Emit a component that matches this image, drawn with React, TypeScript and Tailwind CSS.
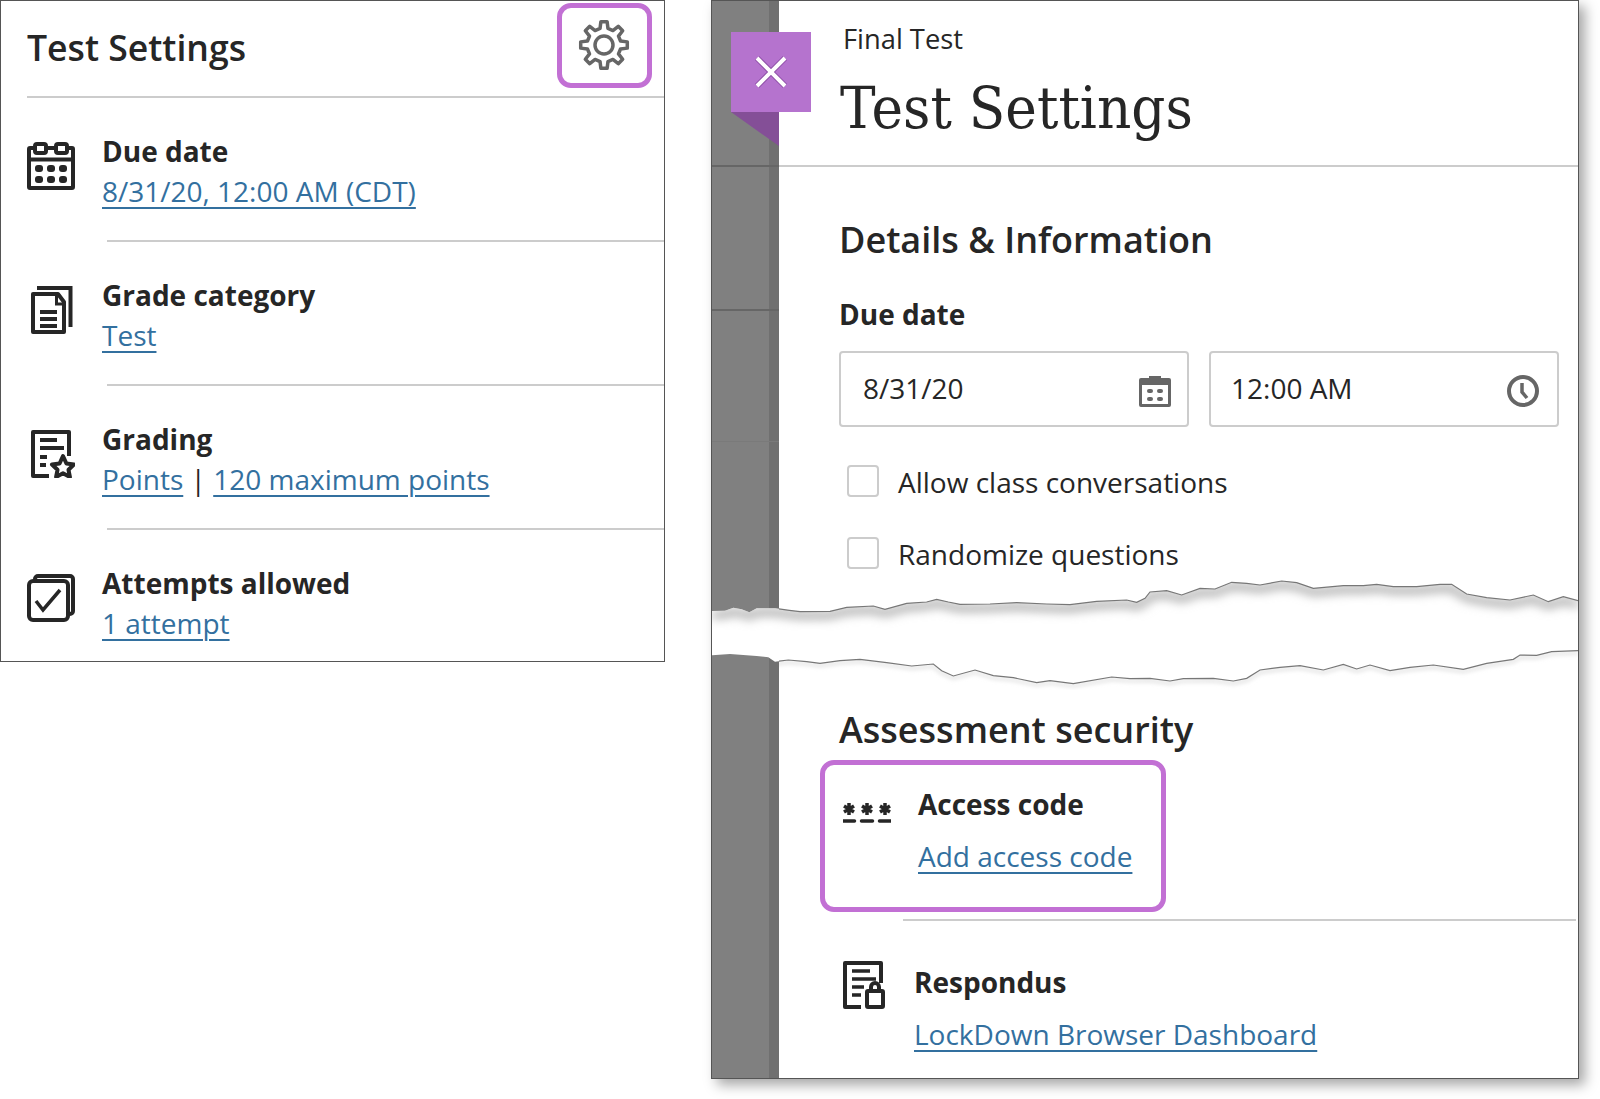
import type { ReactNode } from 'react'

const font = { fontFamily: '"Open Sans", sans-serif' }

// torn edge traced from the picture, 3 units to a pixel, starting at the panel's left side
const upperEdge = '36,123 75,122 100,113 125,118 148,127 170,115 225,115 268,121 300,125 390,124 440,112 520,108 555,118 620,100 680,96 710,88 745,96 780,103 870,102 950,98 1040,102 1110,104 1190,94 1280,90 1310,97 1335,85 1350,66 1400,62 1445,75 1500,55 1545,57 1595,37 1640,40 1680,45 1745,33 1790,38 1840,55 1930,47 1990,47 2030,43 2080,50 2150,50 2220,43 2255,43 2300,72 2360,83 2430,90 2500,75 2545,95 2590,80 2635,92'
const lowerEdge = '2635,242 2555,245 2510,256 2460,255 2440,268 2360,280 2290,298 2200,285 2130,292 2070,302 2010,285 1970,297 1930,283 1870,300 1800,287 1740,292 1680,300 1640,325 1600,333 1540,325 1450,326 1410,333 1350,325 1290,326 1235,321 1120,341 1050,332 1010,338 940,323 880,317 825,300 760,318 725,302 700,282 635,288 560,278 480,268 420,272 360,280 320,275 265,270 225,275 205,262 170,258 90,252 36,256'

const gearPath = () => {
  const cx = 26
  const cy = 26
  const teeth = 8
  const pts: string[] = []
  for (let i = 0; i < teeth; i++) {
    const a = (i * 2 * Math.PI) / teeth - Math.PI / 2
    const step = (2 * Math.PI) / teeth
    const at = (r: number, off: number) => `${(cx + r * Math.cos(a + off)).toFixed(2)},${(cy + r * Math.sin(a + off)).toFixed(2)}`
    pts.push(at(17, -step * 0.3), at(23.5, -step * 0.17), at(23.5, step * 0.17), at(17, step * 0.3))
  }
  return pts.join(' ')
}

const GearIcon = () => (
  <svg width="52" height="52" viewBox="0 0 52 52" fill="none" stroke="#666" strokeWidth="3.500" strokeLinejoin="round">
    <polygon points={gearPath()} />
    <circle cx="26" cy="26" r="9" />
  </svg>
)

const CalendarIcon = () => (
  <svg width="48" height="48" viewBox="0 0 48 48" fill="none" stroke="#262626" strokeWidth="4">
    <rect x="2" y="6" width="44" height="40" rx="1" />
    <path d="M2 17.500h44" />
    <rect x="8" y="2" width="11" height="9" rx="2" fill="#fff" />
    <rect x="29" y="2" width="11" height="9" rx="2" fill="#fff" />
    <g fill="#262626" stroke="none">
      <rect x="8" y="23" width="8" height="7" rx="3" />
      <rect x="20" y="23" width="8" height="7" rx="3" />
      <rect x="32" y="23" width="8" height="7" rx="3" />
      <rect x="8" y="34" width="8" height="7" rx="3" />
      <rect x="20" y="34" width="8" height="7" rx="3" />
      <rect x="32" y="34" width="8" height="7" rx="3" />
    </g>
  </svg>
)

const DocumentIcon = () => (
  <svg width="48" height="48" viewBox="0 0 48 48" fill="none" stroke="#262626" strokeWidth="4">
    <path d="M10 2h33.500v39" />
    <path d="M6 8h25l6 8v30H6z" strokeLinejoin="round" />
    <path d="M29.500 8v10h7" strokeWidth="3" />
    <path d="M13 26h17M13 33h17M13 40h17" />
  </svg>
)

const GradingIcon = () => (
  <svg width="48" height="48" viewBox="0 0 48 48" fill="none" stroke="#262626" strokeWidth="4">
    <path d="M22 46H6V2h36v24" strokeLinejoin="round" />
    <path d="M13 10h17M13 18h24M13 27h7M13 35h6" />
    <path d="M36 26l3.400 7.500 7.600 1-5.500 5.300 1.400 7.200-6.900-3.700-6.900 3.700 1.400-7.200-5.500-5.300 7.600-1z" strokeLinejoin="round" fill="#fff" />
  </svg>
)

const AttemptsIcon = () => (
  <svg width="48" height="48" viewBox="0 0 48 48" fill="none" stroke="#262626" strokeWidth="4">
    <path d="M8 6V5a3 3 0 0 1 3-3h32a3 3 0 0 1 3 3v32a3 3 0 0 1-3 3h-2" />
    <rect x="2" y="7" width="39" height="39" rx="4" />
    <path d="M9 27l7 9 17-20" strokeWidth="3.500" />
  </svg>
)

const AccessCodeIcon = () => (
  <svg width="48" height="20" viewBox="0 0 48 20" fill="none" stroke="#262626" strokeWidth="3.500">
    {[6, 24, 42].map((x) => (
      <g key={x}>
        <path d={`M${x} 0v12M${x - 5} 3l10 6M${x + 5} 3l-10 6`} />
        <path d={`M${x - 5.500} 18h11`} strokeWidth="3.500" strokeLinecap="round" />
      </g>
    ))}
  </svg>
)

const RespondusIcon = () => (
  <svg width="42" height="48" viewBox="0 0 42 48" fill="none" stroke="#262626" strokeWidth="4">
    <path d="M18 46H2V2h36v20" strokeLinejoin="round" />
    <path d="M9 10h18M9 18h24M9 26h12M9 34h9" strokeWidth="3.500" />
    <rect x="24" y="30" width="16" height="16" rx="1" />
    <path d="M28 30v-4a4 4 0 0 1 8 0v4" />
  </svg>
)

const SmallCalendar = () => (
  <svg width="32" height="32" viewBox="0 0 32 32">
    <path d="M2 3h8V1h12v2h8a2 2 0 0 1 2 2v25a2 2 0 0 1-2 2H2a2 2 0 0 1-2-2V5a2 2 0 0 1 2-2z" fill="#666" />
    <rect x="3" y="10" width="26" height="19" fill="#fff" />
    <g fill="#666">
      <rect x="8" y="14" width="6" height="4" rx="2" />
      <rect x="18" y="14" width="6" height="4" rx="2" />
      <rect x="8" y="22" width="6" height="4" rx="2" />
      <rect x="18" y="22" width="6" height="4" rx="2" />
    </g>
  </svg>
)

const SmallClock = () => (
  <svg width="32" height="32" viewBox="0 0 32 32" fill="none" stroke="#666">
    <circle cx="16" cy="16" r="14" strokeWidth="4" />
    <path d="M15 8v9l5 6" strokeWidth="3.500" />
  </svg>
)

const Link = ({ children }: { children: ReactNode }) => (
  <a className="text-[#33709f] underline underline-offset-[5px] decoration-2">{children}</a>
)

const SummaryRow = ({ icon, title, children, divider = true }: { icon: ReactNode; title: string; children: ReactNode; divider?: boolean }) => (
  <div>
    {divider && <div className="ml-[80px] border-t-2 border-[#ccc]" />}
    <div className="h-[142px] flex">
      <div className="w-[75px] shrink-0 pt-[44px]">{icon}</div>
      <div className="pt-[33px] text-[28px] leading-[40px] text-[#262626]">
        <div className="font-bold">{title}</div>
        <div>{children}</div>
      </div>
    </div>
  </div>
)

function TestSummary() {
  return (
    <div className="w-[665px] h-[662px] border border-[#555] bg-white shrink-0 overflow-hidden">
      <div className="ml-[26px] h-[97px] border-b-2 border-[#ccc] flex items-start justify-between">
        <div className="text-[35.600px] leading-[48px] font-semibold text-[#262626] mt-[22px]">Test Settings</div>
        <div className="w-[95px] h-[85px] mt-[2px] mr-[12px] border-[5px] border-[#c270d4] rounded-[14px] flex items-center justify-center">
          <div className="-mt-[2px] -ml-[1px]"><GearIcon /></div>
        </div>
      </div>
      <div className="ml-[26px]">
        <SummaryRow divider={false} icon={<CalendarIcon />} title="Due date">
          <Link>8/31/20, 12:00 AM (CDT)</Link>
        </SummaryRow>
        <SummaryRow icon={<DocumentIcon />} title="Grade category">
          <Link>Test</Link>
        </SummaryRow>
        <SummaryRow icon={<GradingIcon />} title="Grading">
          <Link>Points</Link> | <Link>120 maximum points</Link>
        </SummaryRow>
        <SummaryRow icon={<AttemptsIcon />} title="Attempts allowed">
          <Link>1 attempt</Link>
        </SummaryRow>
      </div>
    </div>
  )
}

function SettingsPanel() {
  return (
    <div className="relative w-[868px] h-[1079px] border border-[#555] bg-white flex shadow-[6px_6px_12px_rgba(0,0,0,0.35)]">
      {/* dimmed page behind the panel */}
      <div className="w-[67px] shrink-0 bg-[linear-gradient(90deg,#808080_57px,#707070_57px)]">
        <div className="h-[166px] border-b-2 border-[#666]" />
        <div className="h-[144px] border-b-2 border-[#666]" />
        <div className="h-[131px] border-b border-[#7a7a7a]" />
      </div>
      {/* close tab */}
      <div className="absolute left-[19px] top-[31px] w-[80px] h-[80px] bg-[#b573ce] flex items-center justify-center">
        <svg width="36" height="36" viewBox="0 0 36 36" stroke="#fff" strokeWidth="4" className="overflow-visible">
          <path d="M4 4l28 28M32 4L4 32" stroke="#8f4fa8" strokeWidth="6" />
          <path d="M4 4l28 28M32 4L4 32" />
        </svg>
      </div>
      <svg className="absolute left-[19px] top-[111px]" width="48" height="34" viewBox="0 0 48 34">
        <path d="M0 0h48v34z" fill="#844f97" />
      </svg>
      <div className="flex-1 min-w-0 text-[#262626] text-[28px] leading-[40px]">
        <div className="h-[166px] border-b-2 border-[#ccc] pl-[64px] pt-[18px]">
          <div className="text-[27.300px]">Final Test</div>
          <div className="-ml-[3px] mt-[11px] text-[58px] leading-[76px] origin-left scale-x-[0.92] whitespace-nowrap" style={{ fontFamily: '"DejaVu Serif", serif' }}>Test Settings</div>
        </div>
        <div className="pl-[60px]">
          <div className="mt-[49px] text-[36px] leading-[48px] font-semibold">Details &amp; Information</div>
          <div className="mt-[30px] font-bold">Due date</div>
          <div className="mt-[17px] flex gap-[20px]">
            <div className="w-[350px] h-[76px] border-2 border-[#ccc] rounded-[4px] pl-[22px] pr-[16px] flex items-center justify-between">
              <span className="-mt-[2px]">8/31/20</span>
              <div className="mt-[3px]"><SmallCalendar /></div>
            </div>
            <div className="w-[350px] h-[76px] border-2 border-[#ccc] rounded-[4px] pl-[20px] pr-[18px] flex items-center justify-between">
              <span className="-mt-[2px]">12:00 AM</span>
              <div className="mt-[3px]"><SmallClock /></div>
            </div>
          </div>
          <div className="mt-[38px] ml-[8px] flex items-center gap-[19px] h-[32px]">
            <div className="w-[32px] h-[32px] border-2 border-[#ccc] rounded-[4px]" />
            <span className="pt-[2px]">Allow class conversations</span>
          </div>
          <div className="mt-[40px] ml-[8px] flex items-center gap-[19px] h-[32px]">
            <div className="w-[32px] h-[32px] border-2 border-[#ccc] rounded-[4px]" />
            <span className="pt-[2px]">Randomize questions</span>
          </div>
          <div className="mt-[137px] text-[36px] leading-[48px] font-semibold">Assessment security</div>
          <div className="mt-[6px] -ml-[19px] w-[346px] h-[152px] border-[5px] border-[#c270d4] rounded-[14px] pl-[18px] pt-[19px] flex">
            <div className="w-[75px] shrink-0 pt-[19px]"><AccessCodeIcon /></div>
            <div>
              <div className="font-bold">Access code</div>
              <div className="mt-[12px]"><Link>Add access code</Link></div>
            </div>
          </div>
        </div>
        <div className="ml-[124px] mr-[2px] mt-[7px] border-t-2 border-[#ccc] h-[2px]" />
        <div className="pl-[64px] pt-[39px] flex">
          <div className="w-[71px] shrink-0 pt-[1px]"><RespondusIcon /></div>
          <div>
            <div className="font-bold pt-[2px]">Respondus</div>
            <div className="mt-[12px]"><Link>LockDown Browser Dashboard</Link></div>
          </div>
        </div>
      </div>
    </div>
  )
}

export default function App() {
  return (
    <div className="relative w-[1600px] h-[1099px] bg-white overflow-hidden flex gap-[46px]" style={font}>
      <TestSummary />
      <SettingsPanel />
      {/* torn paper break across the panel */}
      <svg className="absolute left-[712px] top-[570px]" width="866" height="120" viewBox="36 0 2598 360" preserveAspectRatio="none">
        <defs>
          <clipPath id="tear">
            <polygon points={`${upperEdge} ${lowerEdge}`} />
          </clipPath>
          <clipPath id="paper">
            <rect x="237" y="0" width="2400" height="360" />
          </clipPath>
          <filter id="soft" x="-5%" y="-50%" width="110%" height="200%"><feGaussianBlur stdDeviation="16 14" /></filter>
          <filter id="softer" x="-5%" y="-50%" width="110%" height="200%"><feGaussianBlur stdDeviation="8 6" /></filter>
        </defs>
        <g clipPath="url(#paper)">
          <polyline points={lowerEdge} transform="translate(0 7)" fill="none" stroke="#ddd" strokeWidth="8" filter="url(#softer)" />
        </g>
        <polygon points={`${upperEdge} ${lowerEdge}`} fill="#fff" />
        <g clipPath="url(#tear)">
          <polyline points={upperEdge} transform="translate(0 12)" fill="none" stroke="#b8b8b8" strokeWidth="26" filter="url(#soft)" />
        </g>
        <g clipPath="url(#paper)" fill="none" stroke="#777" strokeWidth="3.500">
          <polyline points={upperEdge} />
          <polyline points={lowerEdge} />
        </g>
      </svg>
    </div>
  )
}
